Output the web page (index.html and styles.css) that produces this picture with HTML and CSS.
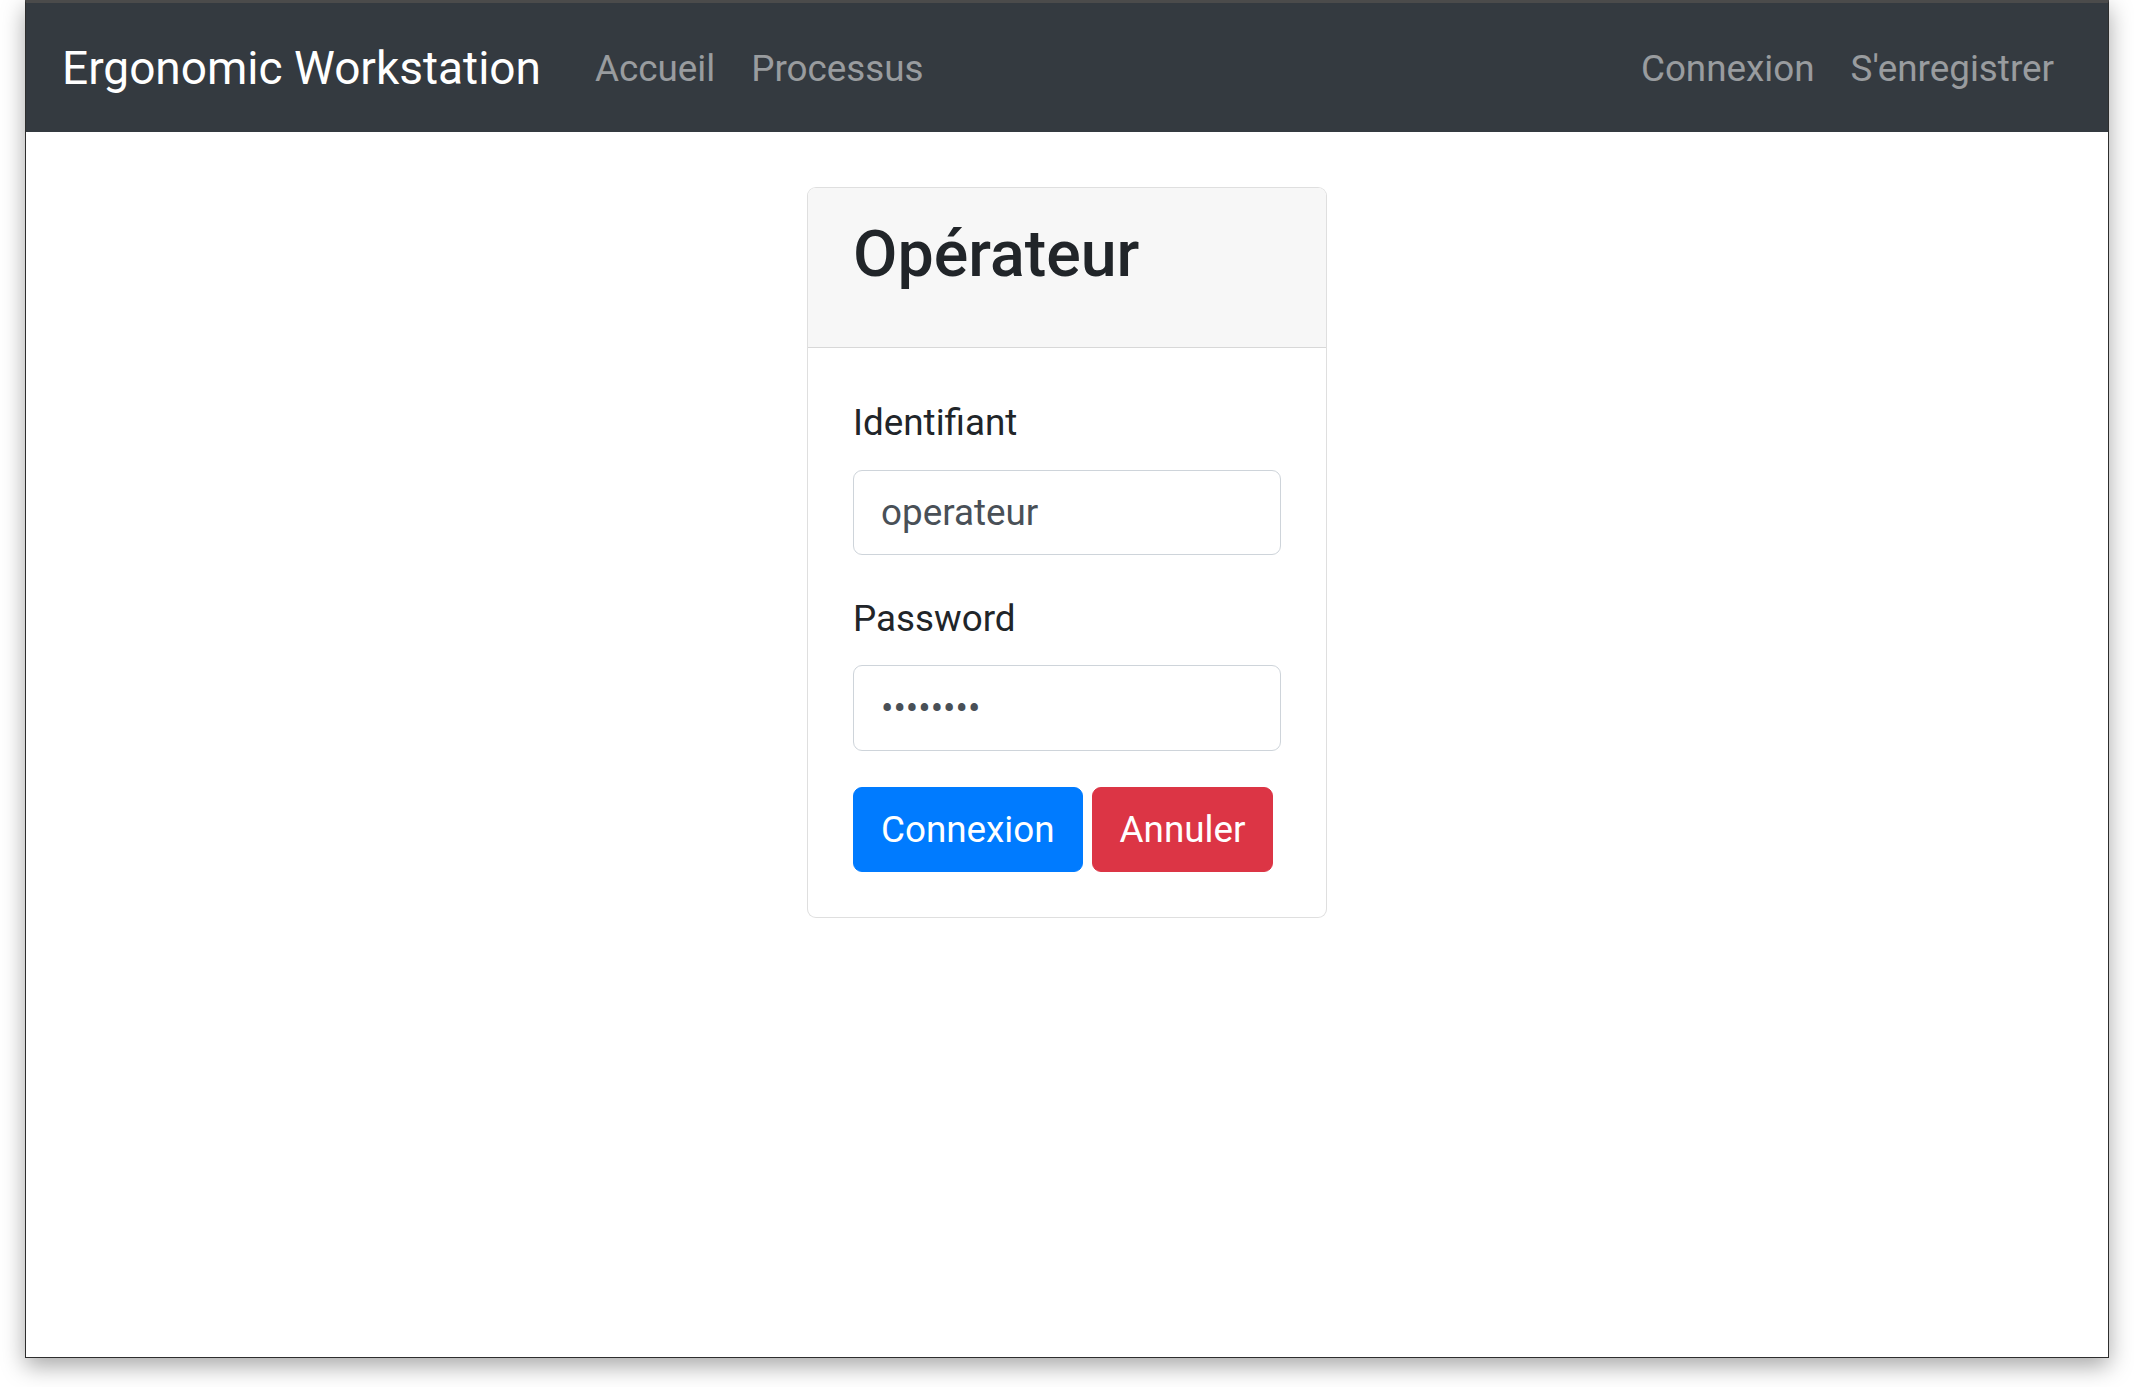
FILE: index.html
```html
<!DOCTYPE html>
<html lang="fr">
<head>
<meta charset="utf-8">
<title>Ergonomic Workstation</title>
<link rel="stylesheet" href="styles.css">
</head>
<body>
<div class="window">
  <nav class="navbar">
    <a class="brand" href="#">Ergonomic Workstation</a>
    <ul class="nav">
      <li><a class="nav-link" href="#">Accueil</a></li>
      <li><a class="nav-link" href="#">Processus</a></li>
    </ul>
    <ul class="nav nav-right">
      <li><a class="nav-link" href="#">Connexion</a></li>
      <li><a class="nav-link" href="#">S'enregistrer</a></li>
    </ul>
  </nav>
  <main class="main">
    <div class="card">
      <div class="card-header">
        <h2 class="card-title">Opérateur</h2>
      </div>
      <form class="card-body">
        <div class="form-group">
          <label class="label" for="login">Identifiant</label>
          <input class="input" id="login" type="text" value="operateur">
        </div>
        <div class="form-group">
          <label class="label" for="pwd">Password</label>
          <input class="input" id="pwd" type="password" value="password">
        </div>
        <div class="actions">
          <button type="button" class="btn btn-primary">Connexion</button>
          <button type="button" class="btn btn-danger">Annuler</button>
        </div>
      </form>
    </div>
  </main>
</div>
</body>
</html>
```
FILE: styles.css
```css
* { box-sizing: border-box; }
html, body { margin: 0; padding: 0; background: #ffffff; }
body {
  font-family: Roboto, "Liberation Sans", Arial, sans-serif;
  color: #212529;
  height: 1387px;
  overflow: hidden;
}
.window {
  margin-left: 25px;
  width: 2084px;
  height: 1358px;
  background: #fff;
  border: 1px solid #2e2e2e;
  border-top: 3px solid #4b4b4b;
  box-shadow: 0 8px 22px rgba(0, 0, 0, 0.35);
  display: flex;
  flex-direction: column;
}
.navbar {
  background: #343a40;
  display: flex;
  align-items: center;
  padding: 20px 36px 18px 36px;
  height: 129px;
  flex: none;
}
.brand {
  font-size: 46px;
  line-height: 1.5;
  padding: 10px 0;
  margin-right: 36px;
  color: #fff;
  text-decoration: none;
  white-space: nowrap;
}
.nav {
  list-style: none;
  margin: 0;
  padding: 0;
  display: flex;
}
.nav-right { margin-left: auto; }
.nav-link {
  display: block;
  font-size: 36.8px;
  line-height: 1.5;
  padding: 18px 18px;
  color: rgba(255, 255, 255, 0.5);
  text-decoration: none;
}
.main {
  display: flex;
  justify-content: center;
  padding-top: 55px;
}
.card {
  width: 520px;
  border: 1px solid rgba(0, 0, 0, 0.125);
  border-radius: 9px;
  background: #fff;
  overflow: hidden;
}
.card-header {
  background: #f7f7f7;
  border-bottom: 1px solid rgba(0, 0, 0, 0.125);
  padding: 27px 45px;
}
.card-title {
  margin: 1px 0 27px 0;
  font-size: 64.5px;
  line-height: 1.2;
  font-weight: 500;
  color: #212529;
}
.card-body {
  padding: 47px 45px 45px 45px;
  margin: 0;
}
.form-group { margin-bottom: 36px; }
.label {
  display: block;
  font-size: 36.8px;
  line-height: 1.5;
  margin-bottom: 19px;
  color: #212529;
}
.input {
  display: block;
  width: 100%;
  height: 85.5px;
  padding: 13px 27px;
  font-family: Roboto, "Liberation Sans", Arial, sans-serif;
  font-size: 36.8px;
  line-height: 1.5;
  color: #495057;
  background: #fff;
  border: 1px solid #ced4da;
  border-radius: 9px;
  outline: none;
}
.actions { display: flex; gap: 9px; }
.btn {
  font-family: Roboto, "Liberation Sans", Arial, sans-serif;
  font-size: 36.8px;
  line-height: 1.5;
  padding: 14px 27px;
  border: 1px solid transparent;
  border-radius: 9px;
  color: #fff;
  cursor: pointer;
}
.btn-primary { background: #007bff; border-color: #007bff; }
.btn-danger { background: #dc3545; border-color: #dc3545; }
```
